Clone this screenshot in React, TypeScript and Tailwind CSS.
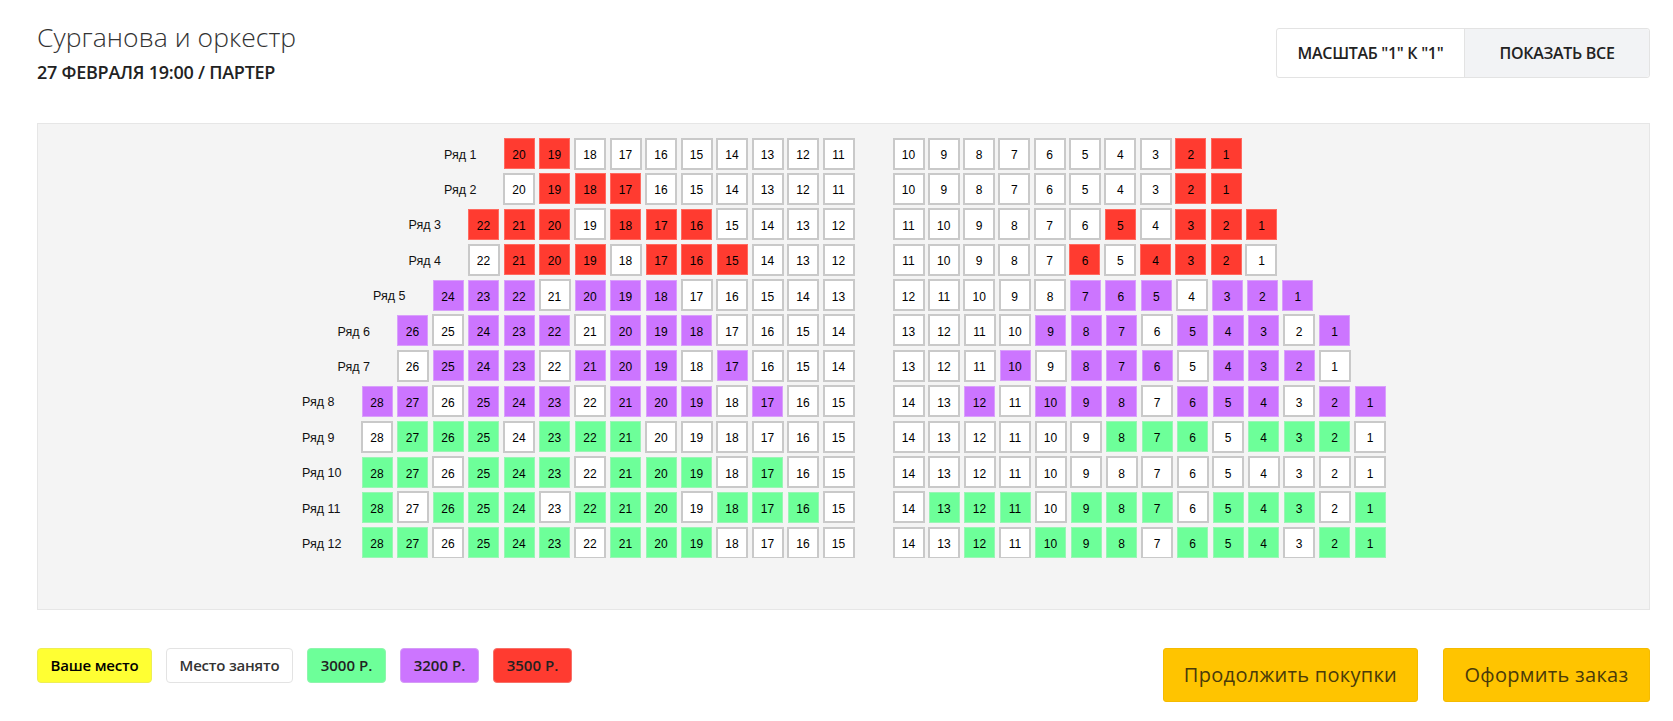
const rows = [
  { n: 1, left: [20, 11], right: [10, 1], gap: "gap-[4.3px]", color: "red", l: [20, 19], r: [2, 1] },
  { n: 2, left: [20, 11], right: [10, 1], gap: "gap-[4.3px]", color: "red", l: [19, 18, 17], r: [2, 1] },
  { n: 3, left: [22, 12], right: [11, 1], gap: "gap-[4.3px]", color: "red", l: [22, 21, 20, 18, 17, 16], r: [5, 3, 2, 1] },
  { n: 4, left: [22, 12], right: [11, 1], gap: "gap-[4.3px]", color: "red", l: [21, 20, 19, 17, 16, 15], r: [6, 4, 3, 2] },
  { n: 5, left: [24, 13], right: [12, 1], gap: "gap-[4.4px]", color: "purple", l: [24, 23, 22, 20, 19, 18], r: [7, 6, 5, 3, 2, 1] },
  { n: 6, left: [26, 14], right: [13, 1], gap: "gap-[4.5px]", color: "purple", l: [26, 24, 23, 22, 20, 19, 18], r: [9, 8, 7, 5, 4, 3, 1] },
  { n: 7, left: [26, 14], right: [13, 1], gap: "gap-[4.5px]", color: "purple", l: [25, 24, 23, 21, 20, 19, 17], r: [10, 8, 7, 6, 4, 3, 2] },
  { n: 8, left: [28, 15], right: [14, 1], gap: "gap-[4.5px]", color: "purple", l: [28, 27, 25, 24, 23, 21, 20, 19, 17], r: [12, 10, 9, 8, 6, 5, 4, 2, 1] },
  { n: 9, left: [28, 15], right: [14, 1], gap: "gap-[4.5px]", color: "green", l: [27, 26, 25, 23, 22, 21], r: [8, 7, 6, 4, 3, 2] },
  { n: 10, left: [28, 15], right: [14, 1], gap: "gap-[4.5px]", color: "green", l: [28, 27, 25, 24, 23, 21, 20, 19, 17], r: [] },
  { n: 11, left: [28, 15], right: [14, 1], gap: "gap-[4.5px]", color: "green", l: [28, 26, 25, 24, 22, 21, 20, 18, 17, 16], r: [13, 12, 11, 9, 8, 7, 5, 4, 3, 1] },
  { n: 12, left: [28, 15], right: [14, 1], gap: "gap-[4.5px]", color: "green", l: [28, 27, 25, 24, 23, 21, 20, 19], r: [12, 10, 9, 8, 6, 5, 4, 2, 1] },
];

const seatColors: Record<string, string> = {
  red: "bg-[#ff3b30] border-[#ff6a60]",
  purple: "bg-[#cc75ff] border-[#d9a0fb]",
  green: "bg-[#6dff99] border-[#9af5b5]",
};

function range(from: number, to: number) {
  const out: number[] = [];
  for (let i = from; i >= to; i--) out.push(i);
  return out;
}

function Seat({ num, color }: { num: number; color?: string }) {
  return (
    <div
      className={
        "shrink-0 pt-[3px] flex items-center justify-center text-[12px] text-black " +
        (color
          ? "w-[31px] h-[31px] border " + seatColors[color]
          : "w-[32px] h-[32px] -m-[0.5px] bg-white border-2 border-[#c9c9c9]")
      }
    >
      {num}
    </div>
  );
}

function SeatRow({ row }: { row: (typeof rows)[number] }) {
  return (
    <div className="flex h-[31px] mb-[4.4px]">
      <div className="w-[816px] flex justify-end items-center gap-[4.5px]">
        <div className="w-[55px] pt-[3px] text-[12.5px] text-[#111]">Ряд {row.n}</div>
        {range(row.left[0], row.left[1]).map((s) => (
          <Seat key={s} num={s} color={row.l.includes(s) ? row.color : undefined} />
        ))}
      </div>
      <div className={"ml-[39px] flex items-center " + row.gap}>
        {range(row.right[0], row.right[1]).map((s) => (
          <Seat key={s} num={s} color={row.r.includes(s) ? row.color : undefined} />
        ))}
      </div>
    </div>
  );
}

const legend = [
  { text: "Ваше место", cls: "w-[115px] bg-[#ffff33] border-[#eeee55] text-black tracking-[-0.2px]" },
  { text: "Место занято", cls: "w-[127px] bg-white border-[#e3e3e3] text-[#333] tracking-[-0.2px]" },
  { text: "3000 Р.", cls: "w-[79px] bg-[#6dff99] border-[#8ff5ad] text-[#222]" },
  { text: "3200 Р.", cls: "w-[79px] bg-[#cc75ff] border-[#d59bf7] text-[#222]" },
  { text: "3500 Р.", cls: "w-[79px] bg-[#ff3b30] border-[#f77068] text-[#222]" },
];

export default function App() {
  return (
    <div className="pl-[37px] pr-[23px] h-[721px] bg-white overflow-hidden font-['Open_Sans',sans-serif]">
      {/* Header */}
      <div className="flex justify-between pt-[28px] h-[123px]">
        <div>
          <h1 className="text-[26.5px] leading-[20px] -mt-[1px] text-[#333] font-light tracking-[0.05px]">Сурганова и оркестр</h1>
          <div className="mt-[15px] text-[18px] leading-[20px] font-semibold text-[#222] tracking-[-0.25px]">
            27 ФЕВРАЛЯ 19:00 / ПАРТЕР
          </div>
        </div>
        <div className="flex h-[50px] w-[374px] border border-[#e3e3e3] rounded-[3px] text-[16px] font-semibold text-[#222] tracking-[-0.3px]">
          <div className="w-[187px] flex items-center justify-center">МАСШТАБ "1" К "1"</div>
          <div className="flex-1 flex items-center justify-center bg-[#f2f3f5] border-l border-[#e3e3e3] rounded-r-[3px]">
            ПОКАЗАТЬ ВСЕ
          </div>
        </div>
      </div>

      {/* Seat map */}
      <div className="h-[487px] bg-[#f4f4f4] border border-[#e6e6e6] pt-[14px] font-['Liberation_Sans',sans-serif]">
        <div className="h-[420px] overflow-hidden">
          {rows.map((row) => (
            <SeatRow key={row.n} row={row} />
          ))}
        </div>
      </div>

      {/* Legend and actions */}
      <div className="flex justify-between items-start mt-[38px]">
        <div className="flex gap-[14px]">
          {legend.map((item) => (
            <div
              key={item.text}
              className={
                "h-[35px] flex items-center justify-center border rounded-[4px] text-[15px] font-semibold " +
                item.cls
              }
            >
              {item.text}
            </div>
          ))}
        </div>
        <div className="flex gap-[25px]">
          <div className="w-[255px] h-[54px] flex items-center justify-center bg-[#ffc400] border border-[#f5bb00] rounded-[3px] text-[20px] tracking-[0.3px] text-[#4a3b0a]">
            Продолжить покупки
          </div>
          <div className="w-[207px] h-[54px] flex items-center justify-center bg-[#ffc400] border border-[#f5bb00] rounded-[3px] text-[20px] tracking-[0.3px] text-[#4a3b0a]">
            Оформить заказ
          </div>
        </div>
      </div>
    </div>
  );
}
